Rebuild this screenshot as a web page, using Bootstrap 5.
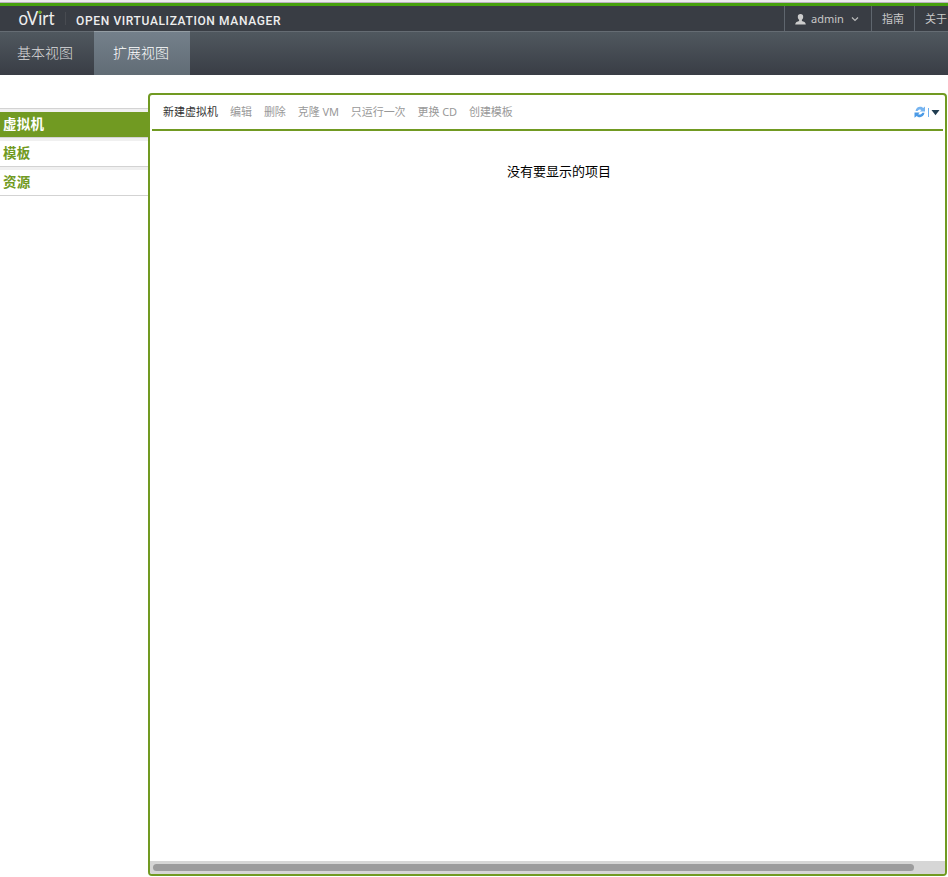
<!DOCTYPE html>
<html lang="zh-CN">
<head>
<meta charset="utf-8">
<meta name="viewport" content="width=device-width, initial-scale=1">
<title>oVirt</title>
<link href="https://cdn.jsdelivr.net/npm/bootstrap@5.3.0/dist/css/bootstrap.min.css" rel="stylesheet">
<style>
body{font-family:"Noto Sans","Noto Sans CJK SC",sans-serif;height:877px;font-size:11px;line-height:16px;color:#000}
.edge{height:3px;background:#ebebeb;border-bottom:1px solid #b9b0bd;flex:none}
.masthead{height:29px;border-top:3px solid #46a00c;border-bottom:1px solid #656c73;background:#393d44;flex:none;color:#c8c8c8}
.logo{width:290px;height:25px}
.util{border-left:1px solid #5f666e;height:25px;padding:1px 10px 0;white-space:nowrap}
.util-user{width:87px}
.util-user svg{flex:none}
.util-name{margin-left:5px}
.util-last{width:34px}
.tabs{height:43px;background:linear-gradient(#50585f,#393d45);flex:none;font-size:14px;color:#dcdcdc;font-family:"Liberation Sans","Noto Sans CJK SC",sans-serif;font-weight:300}
.tab-item{width:94px;padding:0 0 0 17px;line-height:43px;color:inherit;text-decoration:none}
.tab-item.active{width:96px;padding-left:19px;background:linear-gradient(#74808b,#616c75);color:#fff;box-shadow:0 -1px #949da4}
.side{width:148px;padding-top:33px;flex:none}
.side a{display:block;height:29px;border-top:1px solid #d3d3d3;text-decoration:none;font-weight:700;font-size:13.5px;letter-spacing:.3px;line-height:25px;color:#719a22;padding-top:3px;background:linear-gradient(#f0f0f0 3px,#fff 3px)}
.side a span{display:block;padding-left:3px}
.side a.active span{background:#719a22;color:#fff}
.side a:last-child{height:30px;border-bottom:1px solid #d3d3d3}
.panel{width:799px;height:783px;margin-top:18px;border:2px solid #719a22;border-radius:4px;overflow:hidden;flex:none}
.tools{height:36px;margin:0 2px;padding:0 3px 0 11px;border-bottom:2px solid #719a22;color:#999;gap:12px;flex:none;white-space:nowrap}
.tools span{letter-spacing:-.07px}
.tools .on{color:#333;letter-spacing:0}
.empty{font-size:13px;line-height:20px;padding-top:31px;padding-left:23px;font-family:"Liberation Sans","Noto Sans CJK SC",sans-serif}
.track{height:13px;background:#d6d6d6;padding:3px;flex:none}
.thumb{width:761px;height:7px;border-radius:4px;background:#9c9c9d}
</style>
<script src="https://cdn.jsdelivr.net/npm/bootstrap@5.3.0/dist/js/bootstrap.bundle.min.js"></script>
</head>
<body class="d-flex flex-column overflow-hidden bg-white">
<div class="edge"></div>
<header class="masthead d-flex">
  <svg class="logo" viewBox="0 6 290 25" aria-label="oVirt Open Virtualization Manager">
    <g fill="#eee">
      <text x="18.500" y="25" font-family="Lato" font-size="19" textLength="36" lengthAdjust="spacingAndGlyphs">oVirt</text>
      <text x="76" y="25" font-family="Roboto" font-weight="500" font-size="12" textLength="204.500" lengthAdjust="spacing">OPEN VIRTUALIZATION MANAGER</text>
    </g>
    <circle cx="39.800" cy="12.200" r="1.600" fill="#5eae26"/>
    <path d="M65.500 12v13" stroke="#484b51"/>
  </svg>
  <div class="util util-user d-flex align-items-center ms-auto">
    <svg width="11" height="11" viewBox="0 0 11 11" fill="#ccc"><path d="M5.500 0C3.700 0 2.800 1.100 2.800 2.700c0 1.400.5 2.400 1.300 3v1.200L1.500 8Q.4 8.600.2 10.500h10.600Q10.600 8.600 9.500 8L6.900 6.900V5.700c.8-.6 1.300-1.600 1.300-3C8.200 1.100 7.300 0 5.500 0z"/></svg>
    <span class="util-name">admin</span>
    <svg class="ms-auto" width="10" height="8" viewBox="0 0 10 8" fill="none" stroke="#bbb" stroke-width="1.200"><path d="M1 2.500l3 3 3-3"/></svg>
  </div>
  <div class="util d-flex align-items-center">指南</div>
  <div class="util util-last d-flex align-items-center overflow-hidden">关于</div>
</header>
<nav class="tabs d-flex"><a class="tab-item" href="#">基本视图</a><a class="tab-item active" href="#">扩展视图</a></nav>
<main class="d-flex">
  <nav class="side">
    <a class="active" href="#"><span>虚拟机</span></a>
    <a href="#"><span>模板</span></a>
    <a href="#"><span>资源</span></a>
  </nav>
  <section class="panel d-flex flex-column">
    <div class="tools d-flex align-items-center">
      <span class="on">新建虚拟机</span><span>编辑</span><span>删除</span><span>克隆 VM</span><span>只运行一次</span><span>更换 CD</span><span>创建模板</span>
      <svg class="ms-auto" width="27" height="12" viewBox="0 0 27 12">
        <path d="M2.500 5C2.900 2.300 5 .8 7 .8c1.500 0 2.500.5 3.200 1.300L12 .5V5.500H6.800L8.500 3.900C7.300 3 5.300 3.300 4.500 5z" fill="#76b4f0"/>
        <path d="M11.500 6.800C11 9.700 9 11.200 7 11.200c-1.400 0-2.600-.5-3.300-1.300L1.500 11.700V6.500H6.700L5.200 8.200c1.300.9 3.500.3 4.100-1.400z" fill="#4a9ae6"/>
        <path d="M15.500 2v9" stroke="#6fb0ef"/>
        <path d="M18.500 4h8l-4 5.300z" fill="#203c50"/>
      </svg>
    </div>
    <div class="empty flex-grow-1 text-center">没有要显示的项目</div>
    <div class="track"><div class="thumb"></div></div>
  </section>
</main>
</body>
</html>
